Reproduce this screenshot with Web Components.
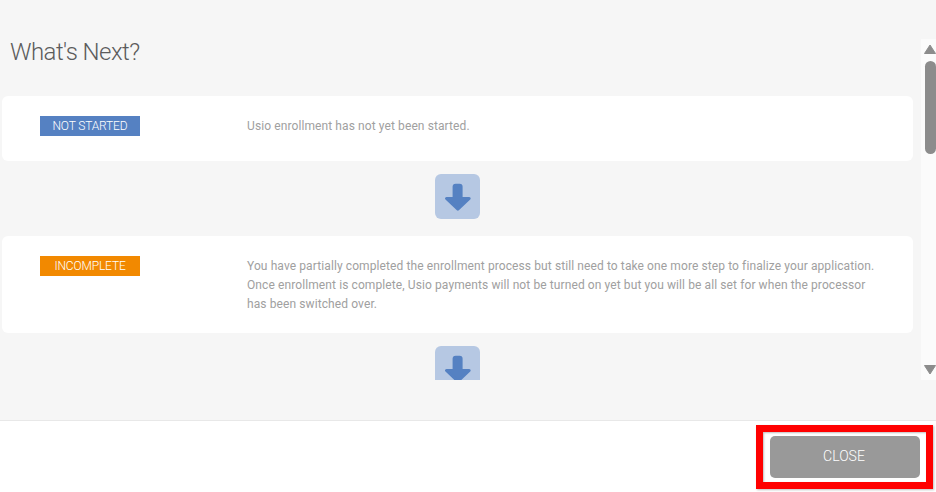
<!DOCTYPE html>
<html lang="en">
<head>
<meta charset="utf-8">
<title>What's Next?</title>
<style>
  html, body { margin: 0; padding: 0; background: #fff; }
  body { font-family: "Roboto", "Liberation Sans", sans-serif; }
</style>
</head>
<body>
<next-modal>
  <status-card label="NOT STARTED" color="#5581c2" style="--card-height: 65px">
    Usio enrollment has not yet been started.
  </status-card>
  <flow-arrow></flow-arrow>
  <status-card label="INCOMPLETE" color="#f28900" style="--card-height: 97px">
    You have partially completed the enrollment process but still need to take one more step to finalize your application.<br>
    Once enrollment is complete, Usio payments will not be turned on yet but you will be all set for when the processor<br>
    has been switched over.
  </status-card>
  <flow-arrow></flow-arrow>
</next-modal>

<script>
class StatusCard extends HTMLElement {
  constructor () {
    super()
    this.shadow = this.attachShadow({ mode: 'open' })
  }

  connectedCallback () {
    this.shadow.innerHTML = `
    <style>
      :host{
        background-color: #fff;
        border-radius: 6px;
        display: flex;
        height: var(--card-height);
        box-sizing: border-box;
        padding: 20px 0 0 38px;
      }
      .badge{
        background-color: ${this.getAttribute('color')};
        color: #fff;
        flex: none;
        font-size: 12px;
        font-weight: 300;
        height: 20px;
        letter-spacing: -0.15px;
        line-height: 21px;
        text-align: center;
        width: 100px;
      }
      .text{
        color: #a0a0a0;
        font-size: 12px;
        font-weight: 400;
        letter-spacing: 0.1px;
        line-height: 19px;
        margin-left: 107px;
        padding-top: 1px;
      }
    </style>
    <div class="badge">${this.getAttribute('label')}</div>
    <div class="text"><slot></slot></div>
    `
  }
}
customElements.define('status-card', StatusCard)

class FlowArrow extends HTMLElement {
  constructor () {
    super()
    this.shadow = this.attachShadow({ mode: 'open' })
  }

  connectedCallback () {
    this.shadow.innerHTML = `
    <style>
      :host{
        display: flex;
        justify-content: center;
        padding: 13px 0 17px;
        flex: none;
      }
      .tile{
        background-color: #b6c8e3;
        border-radius: 6px;
        display: block;
        height: 45px;
        width: 45px;
      }
    </style>
    <svg class="tile" viewBox="0 0 45 45" xmlns="http://www.w3.org/2000/svg">
      <rect x="17.6" y="9.7" width="10" height="16" rx="3" fill="#5581c2"/>
      <path d="M11.5 24.5H34.2L22.85 35.2Z" fill="#5581c2" stroke="#5581c2" stroke-width="3" stroke-linejoin="round"/>
    </svg>
    `
  }
}
customElements.define('flow-arrow', FlowArrow)

class ScrollTrack extends HTMLElement {
  constructor () {
    super()
    this.shadow = this.attachShadow({ mode: 'open' })
  }

  connectedCallback () {
    this.shadow.innerHTML = `
    <style>
      :host{
        background-color: #fbfbfb;
        box-sizing: border-box;
        display: flex;
        flex: none;
        flex-direction: column;
        height: 100%;
        padding: 5px 0 5px 3px;
        width: 15px;
      }
      svg{
        display: block;
        flex: none;
      }
      .thumb{
        background-color: #8c8c8c;
        border-radius: 6px;
        flex: none;
        height: 93px;
        margin: 7px 0 0 1px;
        width: 11px;
      }
      .spacer{
        flex: 1;
      }
    </style>
    <svg width="12" height="10" viewBox="0 0 12 10"><path d="M6 1L11.5 9.5H.5Z" fill="#8c8c8c" stroke="#8c8c8c" stroke-linejoin="round"/></svg>
    <div class="thumb"></div>
    <div class="spacer"></div>
    <svg width="12" height="10" viewBox="0 0 12 10"><path d="M.5 .5H11.5L6 9Z" fill="#8c8c8c" stroke="#8c8c8c" stroke-linejoin="round"/></svg>
    `
  }
}
customElements.define('scroll-track', ScrollTrack)

class CloseButton extends HTMLElement {
  constructor () {
    super()
    this.shadow = this.attachShadow({ mode: 'open' })
  }

  connectedCallback () {
    this.shadow.innerHTML = `
    <style>
      :host{
        border: 7px solid #f00;
        box-shadow: 1px 1px 2px rgba(0, 0, 0, 0.25), inset 1px 1px 2px rgba(0, 0, 0, 0.25);
        box-sizing: border-box;
        display: block;
        height: 64px;
        padding: 4px 5px 4px 7px;
        width: 177px;
      }
      button{
        background-color: #999;
        border: none;
        border-radius: 5px;
        color: #fff;
        display: block;
        font-family: inherit;
        font-size: 14px;
        font-weight: 300;
        height: 42px;
        padding: 0 2px 2px 0;
        width: 150px;
      }
    </style>
    <button type="button">CLOSE</button>
    `
  }
}
customElements.define('close-button', CloseButton)

class NextModal extends HTMLElement {
  constructor () {
    super()
    this.shadow = this.attachShadow({ mode: 'open' })
  }

  connectedCallback () {
    this.shadow.innerHTML = `
    <style>
      :host{
        display: flex;
        flex-direction: column;
        height: 492px;
        width: 936px;
      }
      .panel{
        background-color: #f6f6f6;
        border-bottom: 1px solid #e8e8e8;
        box-sizing: border-box;
        flex: none;
        height: 421px;
        padding-top: 39px;
      }
      .scroller{
        display: flex;
        height: 341px;
      }
      .content{
        display: flex;
        flex: 1;
        flex-direction: column;
        min-width: 0;
        overflow: hidden;
        padding: 0 8px 0 2px;
      }
      h1{
        color: #5c5c5c;
        flex: none;
        font-size: 24px;
        font-weight: 300;
        height: 57px;
        letter-spacing: -0.55px;
        line-height: 26px;
        margin: 0;
        padding-left: 8px;
      }
      ::slotted(status-card){
        flex: none;
      }
      .footer{
        display: flex;
        flex: 1;
        justify-content: flex-end;
        padding: 4px 3px 0 0;
      }
    </style>
    <div class="panel">
      <div class="scroller">
        <div class="content">
          <h1>What's Next?</h1>
          <slot></slot>
        </div>
        <scroll-track></scroll-track>
      </div>
    </div>
    <div class="footer">
      <close-button></close-button>
    </div>
    `
  }
}
customElements.define('next-modal', NextModal)
</script>
</body>
</html>
